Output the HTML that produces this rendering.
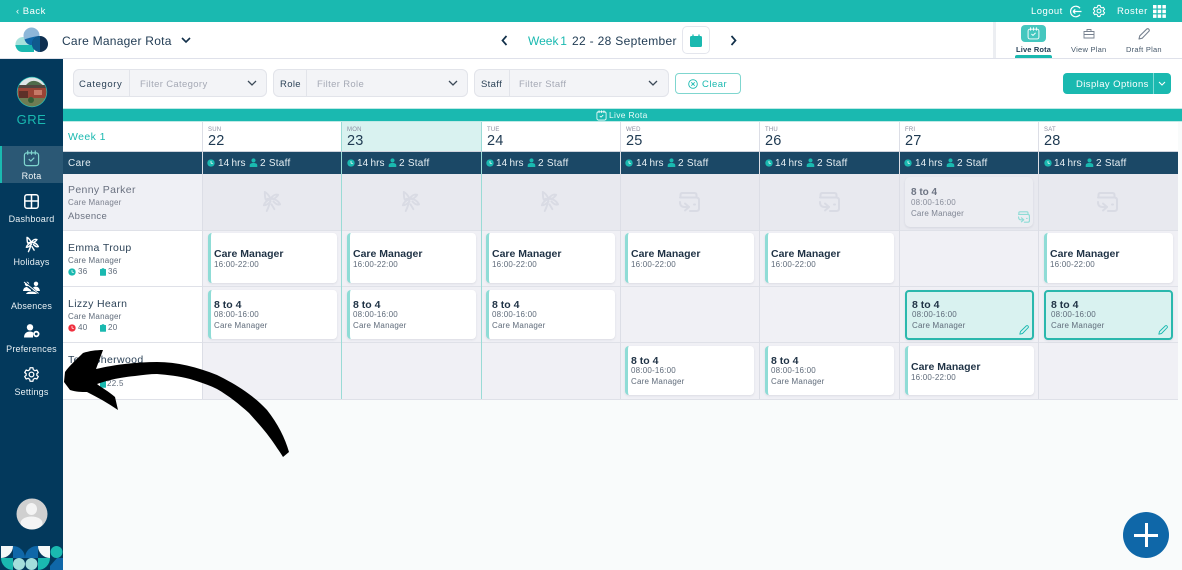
<!DOCTYPE html>
<html lang="en"><head><meta charset="utf-8"><title>Care Manager Rota</title>
<style>
*{box-sizing:border-box}
html,body{margin:0;padding:0}
body{width:1182px;height:570px;overflow:hidden;position:relative;background:#f9fbfb;font-family:"Liberation Sans",sans-serif;color:#1f3a52}
.a{position:absolute}
.t{position:absolute;white-space:nowrap;line-height:12px;letter-spacing:.3px}
.ico{position:absolute;overflow:visible;fill:none}
.nav{position:absolute;left:0;width:63px;text-align:center;color:#e8f0f4;font-size:9px;line-height:12px;letter-spacing:.2px}
.vl{position:absolute;width:1px;background:#dcdee6}
.hl{position:absolute;left:63px;width:1115px;height:1px;background:#dfe1e8}
.dow{position:absolute;top:126px;font-size:6px;line-height:8px;color:#8b8ea0;letter-spacing:.2px}
.dn{position:absolute;top:134px;font-size:14.5px;line-height:15px;color:#1f3a52;letter-spacing:.2px}
.st{position:absolute;top:158px;font-size:10px;line-height:12px;color:#e7f0f4;white-space:nowrap;letter-spacing:.25px}
.hr{letter-spacing:.05px;word-spacing:-.5px}
.card{position:absolute;width:129px;height:50px;background:#fff;border-left:3px solid #8fdcd6;border-radius:4px;box-shadow:0 1px 2px rgba(40,50,80,.1)}
.card b{position:absolute;left:3px;white-space:nowrap;font-size:10.5px;line-height:12px;color:#1f3245;letter-spacing:0}
.card i{position:absolute;left:3px;white-space:nowrap;font-style:normal;font-size:8px;line-height:10px;color:#5f6b7a;letter-spacing:.2px}
.c1 b{top:15px}.c1 i{top:27px}
.c2 b{top:9px}.c2 i.x{top:20px}.c2 i.y{top:31px}
.sel{background:#d9f2f0;border:2px solid #2bb8ad;border-radius:4px}
.sel b{left:5px;top:7px}.sel i.x{left:5px;top:18px}.sel i.y{left:5px;top:29px}
.n{font-size:10.5px;color:#2d4358;letter-spacing:.35px}
.s{font-size:8px;color:#5f6b7a;letter-spacing:.2px}
.fb{position:absolute;top:69px;height:28px;background:#f3f4f7;border:1px solid #e2e4ea;border-radius:6px}
.fl{position:absolute;top:0;bottom:0;border-right:1px solid #e2e4ea}
.lb{font-size:9.5px;color:#2d4358;letter-spacing:.6px;top:79px}
.ph{font-size:9.5px;color:#a5a9b5;letter-spacing:.35px;top:79px}
</style></head><body>
<svg width="0" height="0" style="position:absolute">
<defs>
<symbol id="clk" viewBox="0 0 10 10"><circle cx="5" cy="5" r="4.6" fill="currentColor"/><path d="M5 2.5V5L7.2 6" stroke="#fff" stroke-width=".9" fill="none"/></symbol>
<symbol id="usr" viewBox="0 0 10 10"><circle cx="5" cy="2.7" r="2.3" fill="#1ab9b0"/><path d="M.8 10V8.2C.8 6.4 2.3 5.600 5 5.600S9.200 6.400 9.200 8.200V10Z" fill="#1ab9b0"/></symbol>
<symbol id="clip" viewBox="0 0 8 10"><path d="M2.400 0H5.600V1H7.400A.6.6 0 0 1 8 1.600V9.400A.6.6 0 0 1 7.400 10H.6A.6.6 0 0 1 0 9.400V1.600A.6.6 0 0 1 .6 1H2.400Z" fill="#1ab9b0"/></symbol>
<symbol id="palm" viewBox="0 0 22 24"><g fill="none" stroke="currentColor" stroke-width="2" stroke-linejoin="round" stroke-linecap="round"><path d="M6 22C8 18 9.500 14 10 9"/><path d="M10 9C8 5 6 3 4 2C4 5 4 8 5 10C7 9 9 9 10 9Z"/><path d="M10 9C12 6 15 4 18 5C17 7 15 8 14 9Z"/><path d="M10 9C14 9 18 11 20 15C17 16 15 14 13 12"/><path d="M10 9C8 10 4 12 3 16C6 16 8 14 10 12"/><path d="M11 15L14 20"/></g></symbol>
<symbol id="swap" viewBox="0 0 21 20"><g fill="none" stroke="currentColor" stroke-width="2" stroke-linejoin="round" stroke-linecap="round"><path d="M1.500 5V2.800Q1.500 1 3.500 1H15.500Q17.500 1 17.500 3V5"/><path d="M1 5.500H17Q20 5.500 20 8V16.500Q20 19 17.500 19H11"/><path d="M1 10Q1 15 5.500 15H10"/><path d="M6 11.500L10 15L6 18.500"/><path d="M15 12.500H16"/></g></symbol>
<symbol id="pen" viewBox="0 0 12 12"><path d="M1 11L1.800 7.800L8.600 1.200C9.300.5 10.200.5 10.800 1.200S11.500 2.700 10.800 3.400L4.200 10.200Z" fill="none" stroke="currentColor" stroke-width="1.100" stroke-linejoin="round"/></symbol>
<symbol id="gear" viewBox="0 0 24 24"><g fill="none" stroke="currentColor" stroke-width="1.800" stroke-linejoin="round"><circle cx="12" cy="12" r="3.300"/><path d="M10 2.500H14L14.600 5.300L16.900 6.600L19.600 5.700L21.600 9.200L19.500 11V13.100L21.600 14.900L19.600 18.300L16.900 17.400L14.600 18.700L14 21.500H10L9.400 18.700L7.100 17.400L4.400 18.300L2.400 14.900L4.500 13.100V11L2.400 9.200L4.400 5.700L7.100 6.600L9.400 5.300Z"/></g></symbol>
<symbol id="cal" viewBox="0 0 18 18"><g fill="none" stroke="currentColor" stroke-width="1.300" stroke-linecap="round" stroke-linejoin="round"><rect x="1.500" y="3" width="15" height="13.500" rx="2.500"/><path d="M5 1V4.500M9 1V4.500M13 1V4.500"/><path d="M6.500 10L8.300 11.700L11.500 8.500"/></g></symbol>
</defs></svg>

<!-- top bar -->
<div class="a" style="left:0;top:0;width:1182px;height:22px;background:#1ab9b0"></div>
<div class="t" style="left:16px;top:6px;color:#fff;font-size:9.500px;letter-spacing:.5px">‹ Back</div>
<div class="t" style="left:1031px;top:6px;color:#fff;font-size:9.500px;letter-spacing:.45px">Logout</div>
<svg class="ico" style="left:1069px;top:5px" width="13" height="13" viewBox="0 0 13 13"><path d="M11 3.200A5.300 5.300 0 1 0 11 9.800M4 6.500H12.500M4 6.500L6.300 4.400M4 6.500L6.300 8.600" stroke="#fff" stroke-width="1.200"/></svg>
<svg class="ico" style="left:1092px;top:4px;color:#fff" width="14" height="14"><use href="#gear"/></svg>
<div class="t" style="left:1117px;top:6px;color:#fff;font-size:9.500px;letter-spacing:.45px">Roster</div>
<svg class="ico" style="left:1153px;top:5px" width="13" height="13" viewBox="0 0 13 13"><g fill="#fff"><rect width="3.500" height="3.500"/><rect x="4.700" width="3.500" height="3.500"/><rect x="9.400" width="3.500" height="3.500"/><rect y="4.700" width="3.500" height="3.500"/><rect x="4.700" y="4.700" width="3.500" height="3.500"/><rect x="9.400" y="4.700" width="3.500" height="3.500"/><rect y="9.400" width="3.500" height="3.500"/><rect x="4.700" y="9.400" width="3.500" height="3.500"/><rect x="9.400" y="9.400" width="3.500" height="3.500"/></g></svg>

<!-- second bar -->
<div class="a" style="left:0;top:22px;width:1182px;height:37px;background:#fff;border-bottom:1px solid #dfe1ea"></div>
<svg class="ico" style="left:14px;top:27px" width="35" height="27" viewBox="0 0 35 27">
<path d="M8.500 10H20V18H1.500A7.500 7.500 0 0 1 8.500 10Z" fill="#a6e1dc"/><path d="M1.300 18H20V25H8.500C4.500 25 2 22 1.300 18Z" fill="#1ab9b0"/>
<circle cx="17.500" cy="8.500" r="8" fill="#8db7d9"/><path d="M10.500 12.500C14 11 22 9 25.500 9A8 8 0 0 1 18 16.500L18 18H16C13 17 11.500 15 10.500 12.500Z" fill="#0f67a8"/>
<circle cx="26" cy="17" r="8" fill="#0e2f50"/><path d="M26 9A8 8 0 0 0 26 25Z" fill="#0f5a8e"/></svg>
<div class="t" style="left:62px;top:35px;font-size:12px;color:#1f3a52;letter-spacing:.25px">Care Manager Rota</div>
<svg class="ico" style="left:181px;top:37px" width="10" height="7"><path d="M1 1L5 5L9 1" stroke="#12304a" stroke-width="1.600"/></svg>
<svg class="ico" style="left:501px;top:35px" width="7" height="11"><path d="M5.500 1L1.500 5.500L5.500 10" stroke="#12304a" stroke-width="1.700"/></svg>
<div class="t" style="left:528px;top:35px;font-size:12px;color:#1ab9b0;letter-spacing:0;word-spacing:-1.500px">Week 1</div>
<div class="t" style="left:572px;top:35px;font-size:12px;color:#1f3a52;letter-spacing:.32px">22 - 28 September</div>
<div class="a" style="left:682px;top:26px;width:28px;height:28px;background:#fff;border:1px solid #e4e6ed;border-radius:5px"></div>
<svg class="ico" style="left:690px;top:34px" width="12" height="13" viewBox="0 0 12 13"><path d="M0 3.500A1.500 1.500 0 0 1 1.500 2H10.500A1.500 1.500 0 0 1 12 3.500V11.500A1.500 1.500 0 0 1 10.500 13H1.500A1.500 1.500 0 0 1 0 11.500Z" fill="#1ab9b0"/><path d="M3 .5V3M9 .5V3" stroke="#1ab9b0" stroke-width="1.300"/></svg>
<svg class="ico" style="left:730px;top:35px" width="7" height="11"><path d="M1.500 1L5.500 5.500L1.500 10" stroke="#12304a" stroke-width="1.700"/></svg>

<div class="a" style="left:993px;top:22px;width:3px;height:36px;background:#eceef2"></div>
<div class="a" style="left:1021px;top:25px;width:25px;height:17px;background:#45c7bf;border-radius:4px"></div>
<svg class="ico" style="left:1027px;top:27px;color:#fff" width="13" height="13"><use href="#cal"/></svg>
<div class="t" style="left:1016px;top:44px;font-size:7.500px;line-height:11px;color:#1f3a52;letter-spacing:.15px;font-weight:bold">Live Rota</div>
<div class="a" style="left:1015px;top:55px;width:37px;height:3px;background:#1ab9b0;border-radius:2px 2px 0 0"></div>
<svg class="ico" style="left:1083px;top:28px" width="12" height="11" viewBox="0 0 12 11"><path d="M1 3.500H11V10H1ZM4 3.500V1.500H8V3.500M1 6.500H11" stroke="#77818f" stroke-width=".9"/></svg>
<div class="t" style="left:1071px;top:44px;font-size:7.500px;line-height:11px;color:#46586a;letter-spacing:.25px">View Plan</div>
<svg class="ico" style="left:1138px;top:28px;color:#77818f" width="12" height="12"><use href="#pen"/></svg>
<div class="t" style="left:1126px;top:44px;font-size:7.500px;line-height:11px;color:#46586a;letter-spacing:.25px">Draft Plan</div>

<!-- sidebar -->
<div class="a" style="left:0;top:59px;width:63px;height:511px;background:#03395c"></div>
<div class="a" style="left:0;top:146px;width:63px;height:37px;background:#2b5875;border-left:2px solid #1ab9b0"></div>
<svg class="ico" style="left:16px;top:76px" width="32" height="32" viewBox="0 0 32 32"><defs><clipPath id="cp"><circle cx="16" cy="16" r="14.500"/></clipPath></defs><circle cx="16" cy="16" r="15.200" fill="#1ab9b0"/><g clip-path="url(#cp)"><rect width="32" height="32" fill="#b9c8c0"/><rect x="0" y="0" width="32" height="9" fill="#dfe4e6"/><path d="M10 9Q16 2 24 7L28 10H6Z" fill="#4f6b4b"/><rect x="0" y="10" width="32" height="13" fill="#9a4436"/><rect x="0" y="9" width="32" height="3" fill="#50443f"/><rect x="3" y="15" width="9" height="7" fill="#5d3028"/><rect x="18" y="14" width="8" height="5" fill="#c77a68"/><rect x="0" y="22" width="32" height="10" fill="#6e7c53"/><circle cx="15" cy="24" r="3" fill="#355f38"/></g></svg>
<div class="t" style="left:0;width:63px;text-align:center;top:113px;font-size:13px;line-height:14px;color:#1ab9b0;letter-spacing:.5px">GRE</div>

<svg class="ico" style="left:23px;top:150px;color:#7fd5cf" width="17" height="17"><use href="#cal"/></svg>
<div class="nav" style="top:170px;color:#f0f5f7">Rota</div>
<svg class="ico" style="left:24px;top:194px" width="15" height="15" viewBox="0 0 15 15"><path d="M3 .8H12A2.200 2.200 0 0 1 14.200 3V12A2.200 2.200 0 0 1 12 14.200H3A2.200 2.200 0 0 1 .8 12V3A2.200 2.200 0 0 1 3 .8ZM7.500 .8V14.200M.8 7H14.200" stroke="#fff" stroke-width="1.500"/></svg>
<div class="nav" style="top:213px">Dashboard</div>
<svg class="ico" style="left:24px;top:236px;color:#fff" width="16" height="17"><use href="#palm"/></svg>
<div class="nav" style="top:256px">Holidays</div>
<svg class="ico" style="left:23px;top:281px" width="17" height="13" viewBox="0 0 17 13"><g fill="#fff"><circle cx="4" cy="3" r="2.200"/><circle cx="13" cy="2.800" r="2.200"/><path d="M0 10C.5 7 2 6 4 6L8 9V10ZM9 7L12 5.500C15 5.500 16.500 7 17 10H11ZM3 13C4 11 6 10.500 8.500 10.500S13 11 14 13Z"/></g><path d="M2 .5L15 12" stroke="#03395c" stroke-width="1.200"/><path d="M1 1L15.500 12.500" stroke="#fff" stroke-width="1"/></svg>
<div class="nav" style="top:300px">Absences</div>
<svg class="ico" style="left:24px;top:324px" width="16" height="14" viewBox="0 0 16 14"><circle cx="6" cy="3.300" r="3.200" fill="#fff"/><path d="M0 13.500C0 9.500 2.500 7.500 6 7.500C7.500 7.500 8.500 8 9 8.500V13.500Z" fill="#fff"/><circle cx="12.300" cy="10" r="2.300" fill="none" stroke="#fff" stroke-width="1.800"/></svg>
<div class="nav" style="top:343px">Preferences</div>
<svg class="ico" style="left:23px;top:366px;color:#fff" width="17" height="17"><use href="#gear"/></svg>
<div class="nav" style="top:386px">Settings</div>
<svg class="ico" style="left:16px;top:498px" width="32" height="32" viewBox="0 0 32 32"><defs><clipPath id="cq"><circle cx="16" cy="16" r="15.500"/></clipPath></defs><circle cx="16" cy="16" r="15.500" fill="#d0d0d0"/><g clip-path="url(#cq)" fill="#f4f4f4"><ellipse cx="15.500" cy="11" rx="5.500" ry="6"/><ellipse cx="15.500" cy="25" rx="11" ry="6.500"/></g></svg>
<svg class="ico" style="left:0;top:546px" width="63" height="24" viewBox="0 0 63 24">
<path d="M1 0H13A12 12 0 0 1 1 12Z" fill="#f4f8f8"/>
<path d="M13 0A12 12 0 0 1 25 12H13Z" fill="#0f67a8"/>
<path d="M25 12A12 12 0 0 1 38 0V12Z" fill="#0f67a8"/><path d="M38 0H50V12A12 12 0 0 1 38 0Z" fill="#f4f8f8"/>
<circle cx="56.500" cy="6" r="6" fill="#1ab9b0"/>
<path d="M1 12H13V24A12 12 0 0 1 1 12Z" fill="#1ab9b0"/>
<circle cx="19" cy="18" r="6" fill="#a3dfdc"/><circle cx="31.500" cy="18" r="6" fill="#a3dfdc"/>
<path d="M38 12H50A12 12 0 0 1 38 24Z" fill="#1ab9b0"/><path d="M50 12H63V24H50Z" fill="#0f67a8"/><path d="M50 12H57L50 20Z" fill="#03395c"/>
</svg>

<!-- filters -->
<div class="a" style="left:63px;top:59px;width:1119px;height:49px;background:#fff"></div>
<div class="fb" style="left:73px;width:194px"><div class="fl" style="left:0;width:56px"></div></div>
<div class="t lb" style="left:79px">Category</div>
<div class="t ph" style="left:140px">Filter Category</div>
<svg class="ico" style="left:247px;top:80px" width="10" height="7"><path d="M1 1L5 5L9 1" stroke="#3c4a58" stroke-width="1.300"/></svg>
<div class="fb" style="left:273px;width:195px"><div class="fl" style="left:0;width:33px"></div></div>
<div class="t lb" style="left:280px;letter-spacing:.35px">Role</div>
<div class="t ph" style="left:317px">Filter Role</div>
<svg class="ico" style="left:448px;top:80px" width="10" height="7"><path d="M1 1L5 5L9 1" stroke="#3c4a58" stroke-width="1.300"/></svg>
<div class="fb" style="left:474px;width:195px"><div class="fl" style="left:0;width:35px"></div></div>
<div class="t lb" style="left:481px;letter-spacing:.35px">Staff</div>
<div class="t ph" style="left:519px">Filter Staff</div>
<svg class="ico" style="left:648px;top:80px" width="10" height="7"><path d="M1 1L5 5L9 1" stroke="#3c4a58" stroke-width="1.300"/></svg>
<div class="a" style="left:675px;top:73px;width:66px;height:21px;background:#fff;border:1px solid #7fd6cf;border-radius:4px"></div>
<svg class="ico" style="left:688px;top:79px" width="10" height="10" viewBox="0 0 10 10"><circle cx="5" cy="5" r="4.300" stroke="#1ab9b0" stroke-width=".9"/><path d="M3.300 3.300L6.700 6.700M6.700 3.300L3.300 6.700" stroke="#1ab9b0" stroke-width=".9"/></svg>
<div class="t" style="left:702px;top:79px;font-size:9.500px;color:#1ab9b0;letter-spacing:.5px">Clear</div>
<div class="a" style="left:1063px;top:73px;width:108px;height:21px;background:#1ab9b0;border-radius:4px"></div>
<div class="a" style="left:1153px;top:73px;width:1px;height:21px;background:#7fdcd6"></div>
<div class="t" style="left:1076px;top:79px;font-size:9.500px;color:#fff;letter-spacing:.42px">Display Options</div>
<svg class="ico" style="left:1158px;top:81px" width="8" height="5"><path d="M1 1L4 4L7 1" stroke="#fff" stroke-width="1.100"/></svg>

<!-- live bar -->
<div class="a" style="left:63px;top:108px;width:1119px;height:14px;background:#1ab9b0;border-top:1px solid #bfeae6;border-bottom:1px solid #bfeae6"></div>
<svg class="ico" style="left:596px;top:110px;color:#fff" width="11" height="11"><use href="#cal"/></svg>
<div class="t" style="left:609px;top:109px;font-size:8.500px;color:#e9fbf9;letter-spacing:.3px">Live Rota</div>

<!-- header -->
<div class="a" style="left:63px;top:122px;width:1115px;height:30px;background:#fff"></div>
<div class="a" style="left:341px;top:122px;width:140px;height:30px;background:#d9f2f0"></div>
<div class="t" style="left:68px;top:131px;font-size:10.500px;color:#1ab9b0;letter-spacing:.4px">Week 1</div>
<div class="a" style="left:63px;top:152px;width:1115px;height:22px;background:#1b4866"></div>
<div class="t" style="left:68px;top:158px;font-size:10px;color:#e7f0f4;letter-spacing:.35px">Care</div>

<div class="dow" style="left:208px">SUN</div><div class="dn" style="left:208px">22</div>
<div class="dow" style="left:347px">MON</div><div class="dn" style="left:347px">23</div>
<div class="dow" style="left:487px">TUE</div><div class="dn" style="left:487px">24</div>
<div class="dow" style="left:626px">WED</div><div class="dn" style="left:626px">25</div>
<div class="dow" style="left:765px">THU</div><div class="dn" style="left:765px">26</div>
<div class="dow" style="left:905px">FRI</div><div class="dn" style="left:905px">27</div>
<div class="dow" style="left:1044px">SAT</div><div class="dn" style="left:1044px">28</div>

<svg class="ico" style="left:207px;top:159px;color:#1ab9b0" width="8" height="8"><use href="#clk"/></svg><div class="st hr" style="left:218px">14 hrs</div><svg class="ico" style="left:249px;top:158px" width="9" height="9"><use href="#usr"/></svg><div class="st" style="left:260px">2 Staff</div>
<svg class="ico" style="left:347px;top:159px;color:#1ab9b0" width="8" height="8"><use href="#clk"/></svg><div class="st hr" style="left:357px">14 hrs</div><svg class="ico" style="left:388px;top:158px" width="9" height="9"><use href="#usr"/></svg><div class="st" style="left:399px">2 Staff</div>
<svg class="ico" style="left:486px;top:159px;color:#1ab9b0" width="8" height="8"><use href="#clk"/></svg><div class="st hr" style="left:496px">14 hrs</div><svg class="ico" style="left:527px;top:158px" width="9" height="9"><use href="#usr"/></svg><div class="st" style="left:538px">2 Staff</div>
<svg class="ico" style="left:625px;top:159px;color:#1ab9b0" width="8" height="8"><use href="#clk"/></svg><div class="st hr" style="left:636px">14 hrs</div><svg class="ico" style="left:667px;top:158px" width="9" height="9"><use href="#usr"/></svg><div class="st" style="left:678px">2 Staff</div>
<svg class="ico" style="left:765px;top:159px;color:#1ab9b0" width="8" height="8"><use href="#clk"/></svg><div class="st hr" style="left:775px">14 hrs</div><svg class="ico" style="left:806px;top:158px" width="9" height="9"><use href="#usr"/></svg><div class="st" style="left:817px">2 Staff</div>
<svg class="ico" style="left:904px;top:159px;color:#1ab9b0" width="8" height="8"><use href="#clk"/></svg><div class="st hr" style="left:915px">14 hrs</div><svg class="ico" style="left:946px;top:158px" width="9" height="9"><use href="#usr"/></svg><div class="st" style="left:957px">2 Staff</div>
<svg class="ico" style="left:1044px;top:159px;color:#1ab9b0" width="8" height="8"><use href="#clk"/></svg><div class="st hr" style="left:1054px">14 hrs</div><svg class="ico" style="left:1085px;top:158px" width="9" height="9"><use href="#usr"/></svg><div class="st" style="left:1096px">2 Staff</div>

<!-- grid backgrounds -->
<div class="a" style="left:63px;top:174px;width:140px;height:56px;background:#eff0f5"></div>
<div class="a" style="left:203px;top:174px;width:975px;height:56px;background:#e8e9ef"></div>
<div class="a" style="left:63px;top:231px;width:140px;height:168px;background:#fff"></div>
<div class="a" style="left:203px;top:231px;width:975px;height:168px;background:#f0f0f5"></div>
<div class="hl" style="top:230px"></div><div class="hl" style="top:286px"></div><div class="hl" style="top:342px"></div><div class="hl" style="top:399px"></div>

<div class="vl" style="left:202px;top:122px;height:277px"></div>
<div class="vl" style="left:341px;top:122px;height:277px;background:#9adbd6"></div>
<div class="vl" style="left:481px;top:122px;height:277px;background:#9adbd6"></div>
<div class="vl" style="left:620px;top:122px;height:277px"></div>
<div class="vl" style="left:759px;top:122px;height:277px"></div>
<div class="vl" style="left:899px;top:122px;height:277px"></div>
<div class="vl" style="left:1038px;top:122px;height:277px"></div>
<div class="a" style="left:63px;top:151px;width:1115px;height:1px;background:#cfd3dc"></div>

<!-- absence icons -->
<svg class="ico" style="left:261px;top:190px;color:#d9dbe4" width="21" height="23"><use href="#palm"/></svg>
<svg class="ico" style="left:400px;top:190px;color:#d9dbe4" width="21" height="23"><use href="#palm"/></svg>
<svg class="ico" style="left:539px;top:190px;color:#d9dbe4" width="21" height="23"><use href="#palm"/></svg>
<svg class="ico" style="left:679px;top:192px;color:#d9dbe4" width="21" height="20"><use href="#swap"/></svg>
<svg class="ico" style="left:819px;top:192px;color:#d9dbe4" width="21" height="20"><use href="#swap"/></svg>
<svg class="ico" style="left:1097px;top:192px;color:#d9dbe4" width="21" height="20"><use href="#swap"/></svg>
<div class="a" style="left:905px;top:177px;width:128px;height:50px;background:#ecedf2;border-radius:5px;box-shadow:0 1px 2px rgba(40,50,80,.1)"></div>
<div class="t" style="left:911px;top:187px;font-size:10px;color:#6d7483;font-weight:bold;letter-spacing:0">8 to 4</div>
<div class="t" style="left:911px;top:197px;font-size:8px;color:#8a8f9c;letter-spacing:.2px">08:00-16:00</div>
<div class="t" style="left:911px;top:208px;font-size:8px;color:#7f8593;letter-spacing:.15px">Care Manager</div>
<svg class="ico" style="left:1018px;top:211px;color:#8fdcd6" width="12" height="12"><use href="#swap"/></svg>

<!-- people -->
<div class="t n" style="left:68px;top:184px;color:#6a7180">Penny Parker</div>
<div class="t s" style="left:68px;top:197px;color:#7a7f8d">Care Manager</div>
<div class="t" style="left:68px;top:211px;font-size:9.500px;color:#6a7180;letter-spacing:.3px">Absence</div>

<div class="t n" style="left:68px;top:242px">Emma Troup</div>
<div class="t s" style="left:68px;top:255px">Care Manager</div>
<svg class="ico" style="left:68px;top:268px;color:#1ab9b0" width="8" height="8"><use href="#clk"/></svg>
<div class="t s" style="left:78px;top:266px;letter-spacing:.3px">36</div>
<svg class="ico" style="left:100px;top:268px" width="6" height="8"><use href="#clip"/></svg>
<div class="t s" style="left:108px;top:266px;letter-spacing:.3px">36</div>

<div class="t n" style="left:68px;top:298px">Lizzy Hearn</div>
<div class="t s" style="left:68px;top:311px">Care Manager</div>
<svg class="ico" style="left:68px;top:324px;color:#f0303f" width="8" height="8"><use href="#clk"/></svg>
<div class="t s" style="left:78px;top:322px;letter-spacing:.3px">40</div>
<svg class="ico" style="left:100px;top:324px" width="6" height="8"><use href="#clip"/></svg>
<div class="t s" style="left:108px;top:322px;letter-spacing:.3px">20</div>

<div class="t n" style="left:68px;top:354px">Terri Sherwood</div>
<svg class="ico" style="left:100px;top:380px" width="6" height="8"><use href="#clip"/></svg>
<div class="t s" style="left:107px;top:378px;letter-spacing:.3px">22.5</div>

<!-- cards: row Emma -->
<div class="card c1" style="left:208px;top:233px"><b>Care Manager</b><i>16:00-22:00</i></div>
<div class="card c1" style="left:347px;top:233px"><b>Care Manager</b><i>16:00-22:00</i></div>
<div class="card c1" style="left:486px;top:233px"><b>Care Manager</b><i>16:00-22:00</i></div>
<div class="card c1" style="left:625px;top:233px"><b>Care Manager</b><i>16:00-22:00</i></div>
<div class="card c1" style="left:765px;top:233px"><b>Care Manager</b><i>16:00-22:00</i></div>
<div class="card c1" style="left:1044px;top:233px"><b>Care Manager</b><i>16:00-22:00</i></div>
<!-- row Lizzy -->
<div class="card c2" style="left:208px;top:290px;height:49px"><b>8 to 4</b><i class="x">08:00-16:00</i><i class="y">Care Manager</i></div>
<div class="card c2" style="left:347px;top:290px;height:49px"><b>8 to 4</b><i class="x">08:00-16:00</i><i class="y">Care Manager</i></div>
<div class="card c2" style="left:486px;top:290px;height:49px"><b>8 to 4</b><i class="x">08:00-16:00</i><i class="y">Care Manager</i></div>
<div class="card c2 sel" style="left:905px;top:290px;height:50px"><b>8 to 4</b><i class="x">08:00-16:00</i><i class="y">Care Manager</i></div>
<svg class="ico" style="left:1019px;top:325px;color:#1ab9b0" width="10" height="10"><use href="#pen"/></svg>
<div class="card c2 sel" style="left:1044px;top:290px;height:50px"><b>8 to 4</b><i class="x">08:00-16:00</i><i class="y">Care Manager</i></div>
<svg class="ico" style="left:1158px;top:325px;color:#1ab9b0" width="10" height="10"><use href="#pen"/></svg>
<!-- row Terri -->
<div class="card c2" style="left:625px;top:346px;height:49px"><b>8 to 4</b><i class="x">08:00-16:00</i><i class="y">Care Manager</i></div>
<div class="card c2" style="left:765px;top:346px;height:49px"><b>8 to 4</b><i class="x">08:00-16:00</i><i class="y">Care Manager</i></div>
<div class="card c1" style="left:905px;top:346px;height:49px"><b>Care Manager</b><i>16:00-22:00</i></div>

<!-- FAB -->
<div class="a" style="left:1123px;top:512px;width:46px;height:46px;border-radius:50%;background:#0f67a8"></div>
<div class="a" style="left:1134px;top:534px;width:24px;height:2.500px;background:#fff"></div>
<div class="a" style="left:1145px;top:523px;width:2.500px;height:24px;background:#fff"></div>

<!-- arrow -->
<svg class="ico" style="left:0;top:0" width="1182" height="570" viewBox="0 0 1182 570"><path d="M283 457L289 452C285 438 278 424 267 410C252 394 235 384 217 375C197 367 177 362 157 362C135 362 113 365 96 369L103 350C96 350 89 351 83 353C77 359 70 365 65 372L64 382L70 390C76 392 81 392 87 392C97 397 108 403 118 410L115 397C108 391 102 388 97 384C108 380 122 377 135 376C143 375 150 374 157 374C168 375 179 376 190 379C200 382 209 385 217 389C229 396 239 404 249 413C258 423 267 433 273 442C277 448 280 452 283 457Z" fill="#000"/></svg>
</body></html>
